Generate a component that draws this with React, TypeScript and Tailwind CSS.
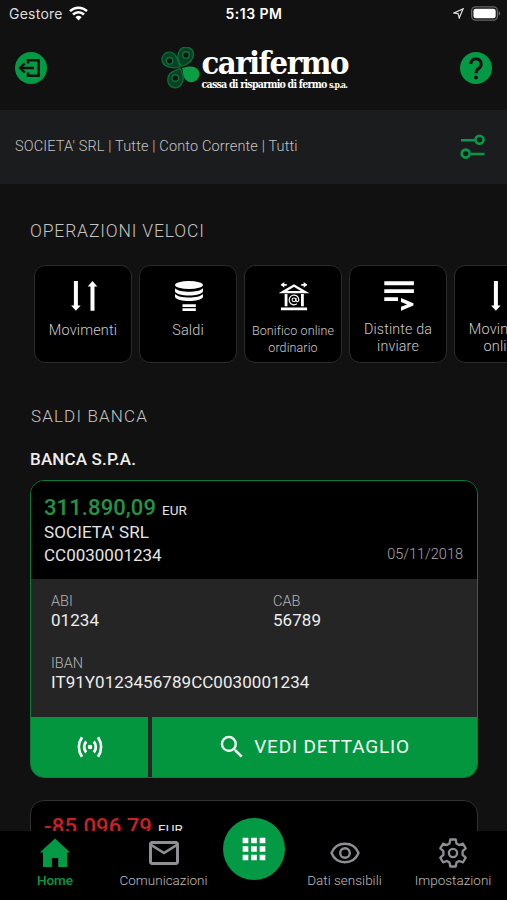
import type { ReactNode } from "react";
import { MdApps, MdSearch, MdOutlineEmail } from "react-icons/md";

interface QuickAction {
  id: string;
  lines: string[];
  icon: ReactNode;
  labelClass: string;
}

interface NavItemProps {
  label: string;
  icon: ReactNode;
  className: string;
  labelClass: string;
}

const ArrowsIcon = () => (
  <svg width="28" height="32" viewBox="0.500 0 28 32" fill="#fff">
    <path d="M4.400 1h4v24.500h2.800l-4.800 5.200-4.800-5.200h2.800zM21 30.700h4V6.500h2.800L23 1l-4.800 5.500H21z" />
  </svg>
);

const CoinsIcon = () => (
  <svg width="30" height="32" viewBox="0 0 30 32" fill="#fff">
    <ellipse cx="15" cy="5" rx="14" ry="4" />
    <path d="M1 8.300C5 13 25 13 29 8.300v3.200C26.500 16.800 3.500 16.800 1 11.500z" />
    <path d="M1 13.900C5 18.600 25 18.600 29 13.900v3C26.500 22.300 3.500 22.300 1 16.900z" />
    <path d="M8.500 24.300h13.300v2.700H8.500zM8.500 28.200h13.300v2.700H8.500z" />
  </svg>
);

const BankIcon = () => (
  <svg width="30" height="32" viewBox="-0.500 0 31 32" fill="none" stroke="#fff">
    <path d="M3.500 12 15 5.200 26.500 12z" strokeWidth="2.500" />
    <path d="M1.500 29.300h27M6.800 14v12.500M23.700 14v12.500" strokeWidth="2.900" />
    <path d="M2 4.500h5.500M28 4.500h-5.500" strokeWidth="1.800" />
    <path d="m5 1.500-3.800 3L5 7.500zM25 1.500l3.800 3L25 7.500z" fill="#fff" stroke="none" />
    <circle cx="15" cy="20" r="2" strokeWidth="1.100" />
    <path d="M17 18v2.500c0 2 3 1.700 3-.7a5 5 0 1 0-2 4.300" strokeWidth="1.200" />
  </svg>
);

const ListSendIcon = () => (
  <svg width="32" height="32" viewBox="0 0 32 32" fill="#fff">
    <path d="M1.300 1.300h29.600v3.900H1.300zM1.300 9.300h29.600v3.800H1.300zM1.300 17.200H15V21H1.300z" />
    <path d="M18 18 30.400 23.300v2.200L18 30.700v-3.900l6.200-2.400L18 22z" />
  </svg>
);

const CloverLogo = () => (
  <svg width="40" height="42" viewBox="0 0 40 42" fill="none">
    <g fill="#0a4125" stroke="#0b7038" strokeWidth="1.300">
      <path d="M19 20C12.500 22 3 20.500 1.200 14A7.300 7.300 0 0 1 14.500 8.500C17 11.500 17.500 16 19 20z" />
      <path d="M20.500 19.500C17.500 15 15.500 9 18.200 4.500a7.500 7.500 0 0 1 14.300 3C32.500 14.500 26 17.500 20.500 19.500z" />
      <path d="M19 21.500C22 26 23.500 32.500 20.800 36.500A7.300 7.300 0 0 1 7 32C7 25.500 13.500 23.500 19 21.500z" />
    </g>
    <g fill="#111" stroke="#0b7038" strokeWidth="1.400">
      <circle cx="8.500" cy="13.800" r="3.300" />
      <circle cx="25" cy="8" r="3.300" />
      <circle cx="14.300" cy="31" r="3.300" />
    </g>
    <path d="M21 21c6-2 14-3 16.500 2.500a8 8 0 1 1-15 5C22 26 22 23.500 21 21z" fill="#0b9e45" />
  </svg>
);

const LogoutIcon = () => (
  <svg width="32" height="32" viewBox="0 0 32 32" fill="none">
    <circle cx="16" cy="16" r="16" fill="#049a45" />
    <path d="M13 11.500V8.300h10.600v15.400H13v-3.200" stroke="#111" strokeWidth="2.500" />
    <path d="M19 16H5.800M9.800 11.300 5.200 16l4.600 4.700" stroke="#111" strokeWidth="2.500" />
  </svg>
);

const HelpIcon = () => (
  <svg width="32" height="32" viewBox="0 0 32 32" fill="none">
    <circle cx="16" cy="16" r="16" fill="#049a45" />
    <path d="M10.800 12a5.200 5.200 0 1 1 8.200 4.200c-2.100 1.500-3 2.400-3 5" stroke="#111" strokeWidth="3" />
    <circle cx="16" cy="25.500" r="1.900" fill="#111" />
  </svg>
);

const FilterIcon = () => (
  <svg width="26" height="26" viewBox="0 0 26 26" fill="none" stroke="#07994a" strokeWidth="2.600">
    <path d="M1 6.200h13.800M11 20h13.500" />
    <circle cx="19.500" cy="5.700" r="4" />
    <circle cx="5.700" cy="19.600" r="4" />
  </svg>
);

const ContactlessIcon = () => (
  <svg width="26" height="22" viewBox="0 0 26 22" fill="none" stroke="#fff" strokeWidth="2.800">
    <circle cx="13" cy="11" r="2.300" fill="#fff" stroke="none" />
    <path d="M9.200 5.500a8.500 8.500 0 0 0 0 11M16.800 5.500a8.500 8.500 0 0 1 0 11M5 1.200c-4 6-4 13.600 0 19.600M21 1.200c4 6 4 13.600 0 19.600" />
  </svg>
);

const HomeIcon = () => (
  <svg width="32" height="30" viewBox="0 0 32 30" fill="#049a45">
    <path d="M16 .5 31.200 14.500H28V29h-8.800v-9h-6.300v9H4V14.500H.8z" />
  </svg>
);

const EyeIcon = () => (
  <svg width="30" height="22" viewBox="0 0 30 22" fill="none" stroke="#8e8f93" strokeWidth="2.400">
    <path d="M1.500 11C4 5 9 1.800 15 1.800S26 5 28.500 11C26 17 21 20.200 15 20.200S4 17 1.500 11z" />
    <circle cx="15" cy="11" r="4.800" />
  </svg>
);

const GearIcon = () => (
  <svg width="30" height="30" viewBox="0 0 30 30" fill="none" stroke="#8e8f93" strokeWidth="2.300">
    <path
      strokeLinejoin="round"
      d="M12.300 1.500h5.400l.8 4 2.600 1.500 3.900-1.300 2.700 4.700-3.100 2.700v3.800l3.100 2.700-2.700 4.700-3.900-1.300-2.600 1.500-.8 4h-5.400l-.8-4L8.900 23 5 24.300l-2.700-4.700 3.100-2.700v-3.800l-3.100-2.700L5 5.700 8.900 7l2.600-1.500z"
    />
    <circle cx="15" cy="15" r="4.100" />
  </svg>
);

const quickActions: QuickAction[] = [
  { id: "movimenti", lines: ["Movimenti"], icon: <ArrowsIcon />, labelClass: "mt-[10px] text-[14.500px] tracking-[0.15px]" },
  { id: "saldi", lines: ["Saldi"], icon: <CoinsIcon />, labelClass: "mt-[10px] text-[14.500px] tracking-[0.15px]" },
  { id: "bonifico", lines: ["Bonifico online", "ordinario"], icon: <BankIcon />, labelClass: "mt-[10px] text-[12.500px] tracking-[0.1px]" },
  { id: "distinte", lines: ["Distinte da", "inviare"], icon: <ListSendIcon />, labelClass: "mt-[9px] text-[14.250px] tracking-[0.15px]" },
  { id: "movimenti-online", lines: ["Movimenti", "online"], icon: <ArrowsIcon />, labelClass: "mt-[9px] text-[14.500px] tracking-[0.15px]" },
];

function StatusBar() {
  return (
    <div className="grid h-7 grid-cols-3 items-center pr-[6px] pb-[2px] pl-[9px] text-white">
      <div className="flex items-center gap-[6px]">
        <span className="font-['Inter',sans-serif] text-[14px] tracking-[0.25px] text-[#dedede]">Gestore</span>
        <svg width="19" height="15" viewBox="0 0 19 15" fill="none" stroke="#fff" strokeWidth="2.500">
          <path d="M1 5.200a12.200 12.200 0 0 1 17 0M4 8.500a7.800 7.800 0 0 1 11 0" />
          <path d="M9.500 14.500 6.400 11.200a4.600 4.600 0 0 1 6.200 0z" fill="#fff" stroke="none" />
        </svg>
      </div>
      <span className="pr-[2px] text-center font-['Inter',sans-serif] text-[14px] font-semibold tracking-[0.5px]">5:13 PM</span>
      <div className="flex items-center justify-end gap-[7px]">
        <svg width="11" height="11" viewBox="0 0 12 12" fill="none" stroke="#ddd" strokeWidth="1.300">
          <path d="M11 1 1 5.400l4.700.9L6.800 11z" />
        </svg>
        <svg width="30" height="15" viewBox="0 0 31 15" fill="none">
          <rect x=".7" y=".7" width="26.600" height="13.600" rx="4" stroke="#666" strokeWidth="1.400" />
          <rect x="2.500" y="2.500" width="23" height="10" rx="2.300" fill="#fff" />
          <path d="M28.700 5.200c2 .7 2 3.900 0 4.600z" fill="#666" />
        </svg>
      </div>
    </div>
  );
}

function Header() {
  return (
    <header className="flex h-[82px] items-center justify-between pr-[15px] pb-[2px] pl-[15px]">
      <LogoutIcon />
      <div className="flex items-center gap-[1px] pl-[2px]">
        <CloverLogo />
        <div className="flex w-[147px] flex-col whitespace-nowrap font-['DejaVu_Serif',serif] font-bold text-white">
          <span className="text-[32.500px] leading-[34px] tracking-[-1.550px] [font-stretch:condensed]">carifermo</span>
          <span className="text-[10.500px] leading-[9px] tracking-[-0.740px] [font-stretch:condensed]">
            cassa di risparmio di fermo <span className="text-[8.500px]">s.p.a.</span>
          </span>
        </div>
      </div>
      <HelpIcon />
    </header>
  );
}

function Field({ label, value }: { label: string; value: string }) {
  return (
    <div className="whitespace-nowrap">
      <p className="text-[14.500px] leading-[18px] font-light text-[#b5b5b5]">{label}</p>
      <p className="text-[17px] leading-[18px] tracking-[0.05px] text-[#ededed]">{value}</p>
    </div>
  );
}

function AccountCard() {
  return (
    <article className="flex h-[298px] flex-col overflow-hidden rounded-[14px] border-[1.500px] border-[#087d39] bg-[#252525]">
      <div className="flex h-[98px] items-end justify-between bg-black pr-[14px] pb-[12px] pl-[13px]">
        <div className="text-[17px] leading-[23px] text-[#e4e4e4]">
          <p className="flex items-baseline gap-[6px] leading-[21px]">
            <span className="text-[22px] font-medium tracking-[0.1px] text-[#259344]">311.890,09</span>
            <span className="text-[13.500px]">EUR</span>
          </p>
          <p className="tracking-[0.1px]">SOCIETA' SRL</p>
          <p>CC0030001234</p>
        </div>
        <span className="mb-px text-[14.500px] font-light text-[#aaaaaa]">05/11/2018</span>
      </div>
      <div className="grid flex-1 grid-cols-[222px_1fr] content-start gap-y-[26px] pt-[14px] pl-[20px]">
        <Field label="ABI" value="01234" />
        <Field label="CAB" value="56789" />
        <Field label="IBAN" value="IT91Y0123456789CC0030001234" />
      </div>
      <div className="flex h-[60px] gap-1">
        <button type="button" className="flex w-[117px] items-center justify-center bg-[#04963f]">
          <ContactlessIcon />
        </button>
        <button type="button" className="flex flex-1 items-center justify-center gap-[7px] bg-[#04963f] pr-[2px] text-[19px] tracking-[0.8px] text-[#f1fff5]">
          <MdSearch size={30} />
          <span>VEDI DETTAGLIO</span>
        </button>
      </div>
    </article>
  );
}

function NavItem({ label, icon, className, labelClass }: NavItemProps) {
  return (
    <div className={`flex flex-col items-center ${className}`}>
      <div className="flex h-[32px] items-center">{icon}</div>
      <span className={`mt-[2px] whitespace-nowrap text-[13.500px] leading-[18px] ${labelClass}`}>{label}</span>
    </div>
  );
}

function BottomNav() {
  const idle = "font-light text-[#bdbdbd]";
  return (
    <nav className="relative flex h-[69px] shrink-0 items-start bg-black pt-[6px]">
      <NavItem label="Home" icon={<HomeIcon />} className="w-[110px]" labelClass="font-medium text-[#049a45]" />
      <NavItem label="Comunicazioni" icon={<MdOutlineEmail size={36} color="#8e8f93" />} className="w-[107px]" labelClass={idle} />
      <NavItem label="Dati sensibili" icon={<EyeIcon />} className="ml-[73px] w-[109px]" labelClass={idle} />
      <NavItem label="Impostazioni" icon={<GearIcon />} className="w-[108px]" labelClass={idle} />
      <button
        type="button"
        className="absolute top-[-13px] left-[223px] flex size-[62px] items-center justify-center rounded-full bg-[#049a45] text-white"
      >
        <MdApps size={34} />
      </button>
    </nav>
  );
}

export default function App() {
  return (
    <div className="flex h-[900px] w-[507px] flex-col overflow-hidden bg-[#111111] font-['Roboto',sans-serif]">
      <StatusBar />
      <Header />
      <div className="flex h-[74px] items-center justify-between bg-[#1b1c1d] pr-[21px] pl-[15px]">
        <span className="text-[14.500px] font-light tracking-[0.15px] text-[#c4c4c4]">SOCIETA' SRL | Tutte | Conto Corrente | Tutti</span>
        <FilterIcon />
      </div>

      <main className="min-h-0 flex-1 overflow-hidden">
        <h2 className="mt-[36px] ml-[30px] text-[17.500px] leading-[22px] font-light tracking-[0.85px] text-[#c4c4c4]">
          OPERAZIONI VELOCI
        </h2>
        <div className="mt-[23px] flex gap-[7px] overflow-hidden pl-[34px]">
          {quickActions.map((action) => (
            <div
              key={action.id}
              className="flex h-[98px] w-[98px] shrink-0 flex-col items-center rounded-[11px] border border-[#2b2b2b] bg-black pt-[14px]"
            >
              <div className="pl-px">{action.icon}</div>
              <div className={`text-center leading-[17px] font-light whitespace-nowrap text-[#cccccc] ${action.labelClass}`}>
                {action.lines.map((line) => (
                  <p key={line}>{line}</p>
                ))}
              </div>
            </div>
          ))}
        </div>

        <section className="mr-[29px] ml-[30px]">
          <h2 className="mt-[42px] ml-px text-[17px] leading-[22px] font-light tracking-[1.150px] text-[#c4c4c4]">SALDI BANCA</h2>
          <h3 className="mt-[21px] mb-[10px] text-[17px] leading-[22px] font-medium tracking-[0.15px] text-[#ededed]">BANCA S.P.A.</h3>
          <AccountCard />
          <article className="mt-[22px] h-[298px] rounded-[14px] border border-[#303030] bg-black px-[13px] pt-[13px]">
            <p className="flex items-baseline gap-[6px] leading-[25px]">
              <span className="text-[22px] font-medium tracking-[0.2px] text-[#c92027]">-85.096,79</span>
              <span className="text-[13.500px] text-[#e4e4e4]">EUR</span>
            </p>
          </article>
        </section>
      </main>

      <BottomNav />
    </div>
  );
}
